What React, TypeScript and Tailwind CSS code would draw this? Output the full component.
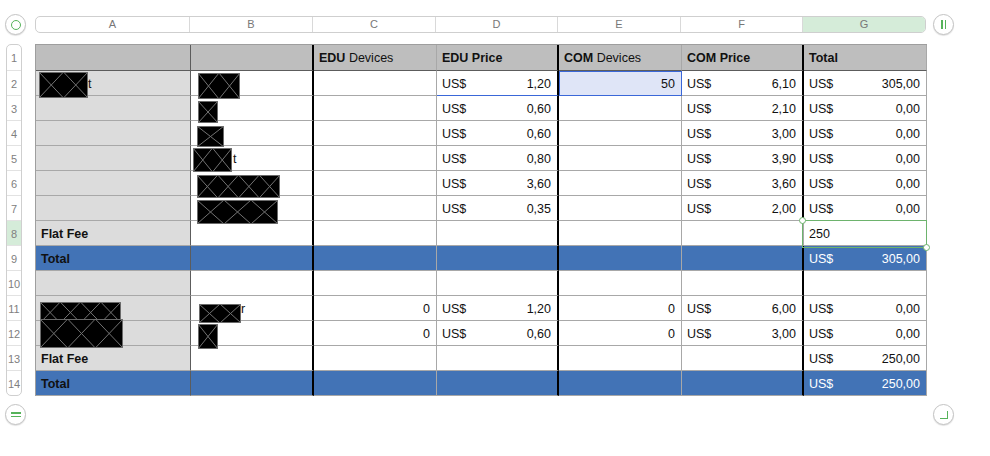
import type { ReactNode } from 'react'

const COLS = [155, 123, 123, 122, 123, 122, 123]

type Box = { l: number; t: number; w: number; h: number }

function Redact({ l, t, w, h }: Box) {
  const n = Math.max(1, Math.round(w / h))
  const cw = w / n
  return (
    <svg
      width={w}
      height={h}
      className="absolute z-10"
      style={{ left: l, top: t }}
      viewBox={`0 0 ${w} ${h}`}
    >
      <rect x={0.5} y={0.5} width={w - 1} height={h - 1} fill="#000" stroke="#6a6a6a" />
      {Array.from({ length: n }).map((_, i) => (
        <g key={i} stroke="#727272" strokeWidth={1}>
          <line x1={i * cw} y1={0} x2={(i + 1) * cw} y2={h} />
          <line x1={(i + 1) * cw} y1={0} x2={i * cw} y2={h} />
        </g>
      ))}
    </svg>
  )
}

function Money({ v, white }: { v: string; white?: boolean }) {
  return (
    <div className={`flex w-full justify-between ${white ? 'text-white' : ''}`}>
      <span>US$</span>
      <span>{v}</span>
    </div>
  )
}

function Circle({ children }: { children: ReactNode }) {
  return (
    <div className="flex h-[21px] w-[21px] shrink-0 items-center justify-center rounded-full border border-[#c4c4c4] bg-white shadow-[0_1px_1px_rgba(0,0,0,0.12)]">
      {children}
    </div>
  )
}

type Row = {
  kind: 'head' | 'body' | 'total'
  cells: ReactNode[]
  boxes?: (Box[] | null)[]
}

const priceRows: [string, string][] = [
  ['1,20', '6,10'],
  ['0,60', '2,10'],
  ['0,60', '3,00'],
  ['0,80', '3,90'],
  ['3,60', '3,60'],
  ['0,35', '2,00'],
]

const rows: Row[] = [
  {
    kind: 'head',
    cells: [
      '',
      '',
      <span><b>EDU</b> Devices</span>,
      <b>EDU Price</b>,
      <span><b>COM</b> Devices</span>,
      <b>COM Price</b>,
      <b>Total</b>,
    ],
  },
  ...priceRows.map(([d, f], i) => ({
    kind: 'body' as const,
    cells: [
      i === 0 ? <span className="pl-[47px]">t</span> : '',
      i === 3 ? <span className="pl-[37px]">t</span> : '',
      '',
      <Money v={d} />,
      i === 0 ? <span className="w-full text-right">50</span> : '',
      <Money v={f} />,
      <Money v={i === 0 ? '305,00' : '0,00'} />,
    ],
    boxes: [
      i === 0 ? [{ l: 3, t: 1, w: 49, h: 26 }] : null,
      [
        [{ l: 7, t: 2, w: 42, h: 26 }],
        [{ l: 7, t: 5, w: 20, h: 22 }],
        [{ l: 6, t: 5, w: 27, h: 21 }],
        [{ l: 2, t: 2, w: 39, h: 24 }],
        [{ l: 6, t: 4, w: 83, h: 23 }],
        [{ l: 6, t: 4, w: 81, h: 24 }],
      ][i],
    ],
  })),
  { kind: 'body', cells: [<b>Flat Fee</b>, '', '', '', '', '', '250'] },
  { kind: 'total', cells: [<b>Total</b>, '', '', '', '', '', <Money v="305,00" white />] },
  { kind: 'body', cells: ['', '', '', '', '', '', ''] },
  {
    kind: 'body',
    cells: [
      '',
      <span className="pl-[45px]">r</span>,
      <span className="w-full text-right">0</span>,
      <Money v="1,20" />,
      <span className="w-full text-right">0</span>,
      <Money v="6,00" />,
      <Money v="0,00" />,
    ],
    boxes: [[{ l: 4, t: 6, w: 81, h: 21 }], [{ l: 8, t: 8, w: 42, h: 19 }]],
  },
  {
    kind: 'body',
    cells: [
      '',
      '',
      <span className="w-full text-right">0</span>,
      <Money v="0,60" />,
      <span className="w-full text-right">0</span>,
      <Money v="3,00" />,
      <Money v="0,00" />,
    ],
    boxes: [[{ l: 4, t: -2, w: 83, h: 29 }], [{ l: 7, t: 3, w: 20, h: 25 }]],
  },
  { kind: 'body', cells: [<b>Flat Fee</b>, '', '', '', '', '', <Money v="250,00" />] },
  { kind: 'total', cells: [<b>Total</b>, '', '', '', '', '', <Money v="250,00" white />] },
]

function cellClass(kind: Row['kind'], r: number, c: number) {
  let cls = 'relative flex items-center border-b border-r pl-[5px] pr-[6px]'
  cls += kind === 'head' ? ' pt-[1px]' : ' pt-[2px]'
  const selected = r === 1 && c === 4
  if (kind === 'head') cls += ' bg-[#bebebe] border-[#a8a8a8] border-b-[#5c5c5c]'
  else if (kind === 'total') cls += ' bg-[#4273b6] border-[#a8a8a8]'
  else if (selected) cls += ' bg-[#dfe5f7] border-[#3a67d8] shadow-[inset_1px_1px_0_#3a67d8]'
  else if (c === 0) cls += ' bg-[#dcdcdc] border-[#a8a8a8]'
  else cls += ' bg-white border-[#a8a8a8]'
  if (c === 0) cls += ' border-r-[#5c5c5c]'
  const thick = (c === 1 || c === 3 || c === 5) && !(r === 7 && c === 5)
  if (thick) cls += ' border-r-2 border-r-black'
  if (r === 1 && c === 3) cls += ' border-b-[#3a67d8]'
  return cls
}

function Sheet() {
  return (
    <div
      className="grid border-l border-t border-[#9e9e9e] text-[12.5px] text-[#111]"
      style={{
        gridTemplateColumns: COLS.map((w) => `${w}px`).join(' '),
        gridTemplateRows: `26px repeat(13, 25px)`,
      }}
    >
      {rows.map((row, r) =>
        row.cells.map((content, c) => (
          <div key={`${r}-${c}`} className={cellClass(row.kind, r, c)}>
            {content}
            {row.boxes?.[c]?.map((b, i) => <Redact key={i} {...b} />)}
            {r === 7 && c === 6 && (
              <div className="pointer-events-none absolute -bottom-[3px] -left-[2px] -right-[1px] -top-[1px] z-20 border border-[#6db36d]">
                <div className="absolute -left-[4px] -top-[4px] h-[7px] w-[7px] rounded-full border border-[#6db36d] bg-white" />
                <div className="absolute -bottom-[4px] -right-[4px] h-[7px] w-[7px] rounded-full border border-[#6db36d] bg-white" />
              </div>
            )}
          </div>
        )),
      )}
    </div>
  )
}

function ColumnBar() {
  const letters = ['A', 'B', 'C', 'D', 'E', 'F', 'G']
  return (
    <div className="flex h-[17px] w-[891px] overflow-hidden rounded-[5px] border border-[#cfcfcf] bg-white text-[11px] text-[#777]">
      {letters.map((l, i) => (
        <div
          key={l}
          className={`flex items-center justify-center ${i < 6 ? 'border-r border-[#d9d9d9]' : 'bg-[#d5ecd9]'}`}
          style={{ width: i === 0 ? COLS[0] - 1 : i === 6 ? COLS[6] - 1 : COLS[i] }}
        >
          {l}
        </div>
      ))}
    </div>
  )
}

function RowBar() {
  return (
    <div className="w-[16px] overflow-hidden rounded-[5px] border border-[#cfcfcf] bg-white text-[11px] text-[#808080]">
      {Array.from({ length: 14 }).map((_, i) => (
        <div
          key={i}
          className={`flex items-center justify-center border-b border-[#e2e2e2] pt-[2px] last:border-b-0 ${i === 7 ? 'bg-[#d5ecd9]' : ''}`}
          style={{ height: i === 0 ? 26 : i === 13 ? 24 : 25 }}
        >
          {i + 1}
        </div>
      ))}
    </div>
  )
}

export default function App() {
  return (
    <div
      className="h-[456px] w-[990px] overflow-hidden bg-white pl-[5px]"
      style={{ fontFamily: '"Liberation Sans", Arial, Helvetica, sans-serif' }}
    >
      <div className="mt-[14px] flex items-center">
        <Circle>
          <div className="h-[10px] w-[10px] rounded-full border-[1.5px] border-[#56b35a]" />
        </Circle>
        <div className="ml-[9px]">
          <ColumnBar />
        </div>
        <div className="ml-[7px]">
          <Circle>
            <div className="flex gap-[2px]">
              <div className="h-[9px] w-[1.5px] bg-[#56b35a]" />
              <div className="h-[9px] w-[1.5px] bg-[#56b35a]" />
            </div>
          </Circle>
        </div>
      </div>

      <div className="mt-[9px] flex items-start">
        <div className="ml-[1px]">
          <RowBar />
        </div>
        <div className="ml-[13px]">
          <Sheet />
        </div>
      </div>

      <div className="mt-[8px] flex items-center">
        <Circle>
          <div className="flex flex-col gap-[2px]">
            <div className="h-[1.5px] w-[10px] bg-[#56b35a]" />
            <div className="h-[1.5px] w-[10px] bg-[#56b35a]" />
          </div>
        </Circle>
        <div className="ml-[907px]">
          <Circle>
            <div className="h-[8px] w-[8px] border-b-[1.5px] border-r-[1.5px] border-[#56b35a]" />
          </Circle>
        </div>
      </div>
    </div>
  )
}
